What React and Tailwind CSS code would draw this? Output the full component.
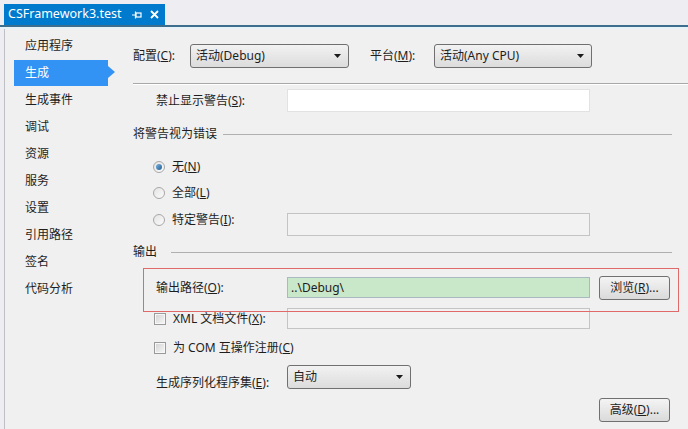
import React from "react";

const font = { fontFamily: '"Noto Sans", "Noto Sans CJK SC", sans-serif' };

function Arrow() {
  return (
    <svg width="7" height="4" viewBox="0 0 7 4" className="shrink-0">
      <path d="M0 0 H7 L3.5 4 Z" fill="#1a1a1a" />
    </svg>
  );
}

function Dropdown({ text, w }) {
  return (
    <div
      className={`flex items-center justify-between h-[24px] ${w} shrink-0 border border-[#707070] rounded-[3px] bg-gradient-to-b from-[#f2f2f2] to-[#dcdcdc] pl-[5px] pr-[7px] text-[12px] text-[#1e1e1e]`}
    >
      <span className="leading-none">{text}</span>
      <Arrow />
    </div>
  );
}

function Button({ children }) {
  return (
    <div className="flex items-center justify-center w-[71px] h-[24px] border border-[#707070] rounded-[3px] bg-gradient-to-b from-[#f4f4f4] to-[#dadada] text-[12px] text-[#1e1e1e] leading-none">
      {children}
    </div>
  );
}

function Radio({ checked }) {
  return (
    <div className="w-[12px] h-[12px] rounded-full border border-[#a8a8a8] bg-gradient-to-br from-[#e4e4e4] to-[#fbfbfb] flex items-center justify-center shrink-0">
      {checked && (
        <div className="w-[6px] h-[6px] rounded-full bg-gradient-to-br from-[#7ab3dc] to-[#1f5f96]" />
      )}
    </div>
  );
}

function Check() {
  return (
    <div className="w-[12px] h-[12px] border border-[#9a9a9a] bg-[#f7f7f7] flex items-center justify-center shrink-0">
      <div className="w-[8px] h-[8px] bg-gradient-to-br from-[#d6d6d6] to-[#f4f4f4]" />
    </div>
  );
}

function Header({ text, lineStart }) {
  return (
    <div className="flex items-center h-[16px] pr-[16px]">
      <span className={`${lineStart} text-[12px] leading-none text-[#1e1e1e] shrink-0`}>{text}</span>
      <div className="flex-1 h-px bg-[#b0b0b0]" />
    </div>
  );
}

const navItems = ["应用程序", "生成", "生成事件", "调试", "资源", "服务", "设置", "引用路径", "签名", "代码分析"];

export default function App() {
  return (
    <div className="w-[688px] h-[429px] overflow-hidden bg-[#f0f0f0] flex flex-col" style={font}>
      {/* tab bar */}
      <div className="h-[25px] bg-[#eeeef2] flex items-end pl-[4px]">
        <div className="h-[21px] w-[161px] bg-[#007acc] flex items-center pl-[4px] text-white">
          <span className="text-[12.5px] leading-none w-[119px] shrink-0 whitespace-nowrap">CSFramework3.test</span>
          <svg width="10" height="10" viewBox="0 0 10 10" className="ml-[5px] shrink-0">
            <path d="M0 5 H3 M3.5 1.5 V8.5" stroke="white" strokeWidth="1.2" fill="none" />
            <rect x="4" y="3" width="5" height="4" fill="none" stroke="white" strokeWidth="1.2" />
          </svg>
          <svg width="9" height="9" viewBox="0 0 9 9" className="ml-[8px] shrink-0">
            <path d="M1 1 L8 8 M8 1 L1 8" stroke="white" strokeWidth="1.8" />
          </svg>
        </div>
      </div>
      <div className="h-[2px] bg-[#3e6e8e]" />
      <div className="h-[2px] bg-[#e6f2f8]" />

      {/* body */}
      <div className="flex-1 flex bg-[#eeeef2] pl-[4px]">
        <div className="flex-1 flex border-l border-[#bfbfc6] bg-[#f0f0f0]">
          {/* sidebar */}
          <div className="w-[128px] shrink-0 pt-[3px] flex flex-col">
            {navItems.map((t) => {
              const sel = t === "生成";
              return sel ? (
                <div key={t} className="h-[27px] flex items-center relative">
                  <div className="ml-[9px] w-[94px] h-[26px] bg-[#3393f5] flex items-center pl-[11px] text-[12px] text-white leading-none">
                    {t}
                  </div>
                  <svg width="7" height="12" viewBox="0 0 7 12" className="absolute left-[103px] top-[7px]">
                    <path d="M0 0 L7 6 L0 12 Z" fill="#3393f5" />
                  </svg>
                </div>
              ) : (
                <div key={t} className="h-[27px] flex items-center pl-[20px] text-[12px] text-[#1e1e1e] leading-none">
                  {t}
                </div>
              );
            })}
          </div>

          {/* main */}
          <div className="flex-1 flex flex-col text-[12px] text-[#1e1e1e]">
            {/* row1 */}
            <div className="mt-[15px] flex items-center h-[24px]">
              <span className="w-[57px] shrink-0 leading-none">配置(<u>C</u>):</span>
              <Dropdown text="活动(Debug)" w="w-[159px]" />
              <span className="ml-[21px] w-[64px] shrink-0 leading-none">平台(<u>M</u>):</span>
              <Dropdown text="活动(Any CPU)" w="w-[158px]" />
            </div>
            <div className="mt-[15px] h-px bg-[#a8a8a8]" />
            <div className="h-px bg-white" />

            {/* suppress warnings */}
            <div className="mt-[4px] flex items-center h-[23px] pl-[23px]">
              <span className="w-[131px] leading-none">禁止显示警告(<u>S</u>):</span>
              <div className="w-[303px] h-[23px] bg-white border border-[#e2e2e2]" />
            </div>

            <div className="mt-[14px]">
              <Header text="将警告视为错误" lineStart="mr-[6px]" />
            </div>

            <div className="mt-[15px] flex items-center h-[20px] pl-[20px]">
              <Radio checked />
              <span className="ml-[7px] leading-none">无(<u>N</u>)</span>
            </div>
            <div className="mt-[6px] flex items-center h-[20px] pl-[20px]">
              <Radio />
              <span className="ml-[7px] leading-none">全部(<u>L</u>)</span>
            </div>
            <div className="mt-[7px] flex items-start pl-[20px]">
              <div className="flex items-center h-[20px] w-[134px]">
                <Radio />
                <span className="ml-[7px] leading-none">特定警告(<u>I</u>):</span>
              </div>
              <div className="mt-[3px] w-[303px] h-[23px] bg-[#f2f2f2] border border-[#c4c4c4]" />
            </div>

            <div className="mt-[8px]">
              <Header text="输出" lineStart="mr-[14px]" />
            </div>

            {/* output path */}
            <div className="mt-[16px] relative flex items-center h-[23px] pl-[23px]">
              <span className="w-[131px] leading-none">输出路径(<u>O</u>):</span>
              <div className="w-[303px] h-[21px] bg-[#c9e7c9] border border-[#a9b9c0] flex items-center pl-[3px] leading-none">
                ..\Debug\
              </div>
              <div className="ml-[9px]">
                <Button>浏览(<u>R</u>)...</Button>
              </div>
              <div className="absolute left-[10px] top-[-8px] w-[536px] h-[44px] border border-[#e06a6a]" />
            </div>

            {/* xml */}
            <div className="mt-[9px] flex items-center h-[21px] pl-[21px]">
              <div className="flex items-center w-[133px]">
                <Check />
                <span className="ml-[7px] leading-none">XML 文档文件(<u>X</u>):</span>
              </div>
              <div className="w-[303px] h-[21px] bg-[#f2f2f2] border border-[#c4c4c4]" />
            </div>

            <div className="mt-[9px] flex items-center h-[20px] pl-[21px]">
              <Check />
              <span className="ml-[7px] leading-none">为 COM 互操作注册(<u>C</u>)</span>
            </div>

            <div className="mt-[7px] flex items-start h-[24px] pl-[23px]">
              <span className="w-[131px] leading-none mt-[12px]">生成序列化程序集(<u>E</u>):</span>
              <Dropdown text="自动" w="w-[124px]" />
            </div>

            <div className="mt-[9px] flex justify-end pr-[18px]">
              <div className="h-[25px] flex">
                <Button>高级(<u>D</u>)...</Button>
              </div>
            </div>
          </div>
        </div>
      </div>
    </div>
  );
}
